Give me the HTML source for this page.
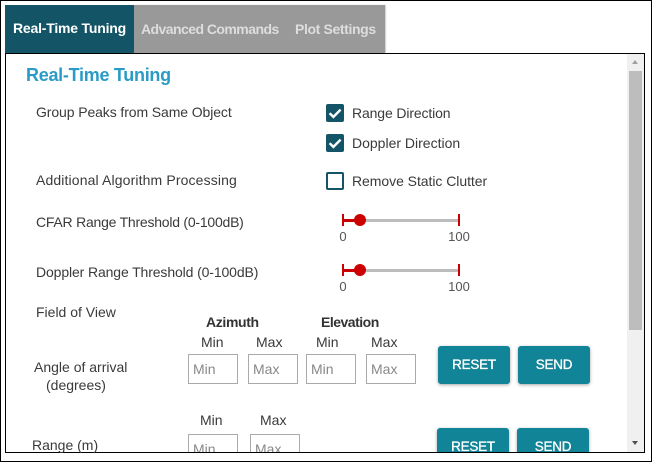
<!DOCTYPE html>
<html><head><meta charset="utf-8"><style>
html,body{margin:0;padding:0;background:#fff}
#r{position:relative;width:652px;height:462px;overflow:hidden;background:#fff;font-family:"Liberation Sans",sans-serif;color:#3a3a3a;font-size:14px}
#r div{position:absolute;white-space:nowrap;box-sizing:border-box}
.t{line-height:16px}
.c{text-align:center}
.box{width:18px;height:18px;border-radius:2px;background:#135566;left:326px}
.box svg{position:absolute;left:0;top:0}
.in{border:1px solid #aaa;height:30px;color:#888;line-height:28px;padding-left:4px;overflow:hidden}
.btn{background:#128497;color:#fff;border-radius:3px;width:72px;height:38px;line-height:37px;text-align:center;box-shadow:0 1px 3px rgba(0,0,0,.35);font-size:13.5px;letter-spacing:-.25px;-webkit-text-stroke:.3px #fff}
.tr{background:#bcbcbc;height:3px}
.rd{background:#cc0000}
</style></head><body><div id="r">
<div style="left:0;top:0;width:652px;height:462px;border:1px solid #000"></div>
<div style="left:5px;top:5px;width:129px;height:48px;background:#135566"></div>
<div style="left:134px;top:5px;width:251px;height:48px;background:#999;box-shadow:1px 0 1px #ccc"></div>
<div class="t" style="left:13px;top:20px;color:#fff;font-weight:bold;letter-spacing:-.2px">Real-Time Tuning</div>
<div class="t" style="left:141px;top:21px;color:#ddd;font-weight:bold;letter-spacing:-.55px">Advanced Commands</div>
<div class="t" style="left:295px;top:21px;color:#ddd;font-weight:bold;letter-spacing:-.37px">Plot Settings</div>
<div style="left:5px;top:53px;width:640px;height:400px;border:1px solid #000;overflow:hidden;background:#fff"></div>

<div class="t" style="left:26px;top:66px;color:#2a9bc6;font-weight:bold;font-size:18px;line-height:18px;letter-spacing:-.28px">Real-Time Tuning</div>
<div class="t" style="left:36px;top:104px;letter-spacing:-.1px">Group Peaks from Same Object</div>
<div class="t" style="left:36px;top:172px;letter-spacing:.13px">Additional Algorithm Processing</div>
<div class="t" style="left:36px;top:214px;letter-spacing:-.23px">CFAR Range Threshold (0-100dB)</div>
<div class="t" style="left:36px;top:264px;letter-spacing:-.12px">Doppler Range Threshold (0-100dB)</div>
<div class="t" style="left:36px;top:304px">Field of View</div>
<div class="t" style="left:34px;top:359px">Angle of arrival</div>
<div class="t" style="left:46px;top:377px">(degrees)</div>
<div class="t" style="left:32px;top:437px">Range (m)</div>

<div class="box" style="top:104px"><svg width="18" height="18" viewBox="0 0 18 18"><path d="M3.6 9.2l3.8 3.7L14.6 5.6" fill="none" stroke="#fff" stroke-width="2.4"/></svg></div>
<div class="t" style="left:352px;top:105px;letter-spacing:-.13px">Range Direction</div>
<div class="box" style="top:134px"><svg width="18" height="18" viewBox="0 0 18 18"><path d="M3.6 9.2l3.8 3.7L14.6 5.6" fill="none" stroke="#fff" stroke-width="2.4"/></svg></div>
<div class="t" style="left:352px;top:135px">Doppler Direction</div>
<div class="box" style="top:172px;background:#fff;border:2px solid #135566"></div>
<div class="t" style="left:352px;top:173px;letter-spacing:-.05px">Remove Static Clutter</div>

<div class="tr" style="left:343px;top:219px;width:116px"></div>
<div class="rd" style="left:343px;top:219px;width:17px;height:3px"></div>
<div class="rd" style="left:342px;top:214px;width:2px;height:12px"></div>
<div class="rd" style="left:458px;top:214px;width:2px;height:12px"></div>
<div class="rd" style="left:354px;top:214px;width:12px;height:12px;border-radius:50%"></div>
<div class="t c" style="left:333px;top:229px;width:20px;font-size:13px;color:#555">0</div>
<div class="t c" style="left:444px;top:229px;width:30px;font-size:13px;color:#555">100</div>

<div class="tr" style="left:343px;top:269px;width:116px"></div>
<div class="rd" style="left:343px;top:269px;width:17px;height:3px"></div>
<div class="rd" style="left:342px;top:264px;width:2px;height:12px"></div>
<div class="rd" style="left:458px;top:264px;width:2px;height:12px"></div>
<div class="rd" style="left:354px;top:264px;width:12px;height:12px;border-radius:50%"></div>
<div class="t c" style="left:333px;top:279px;width:20px;font-size:13px;color:#555">0</div>
<div class="t c" style="left:444px;top:279px;width:30px;font-size:13px;color:#555">100</div>

<div class="t" style="left:206px;top:314px;font-weight:bold;color:#333;letter-spacing:-.35px">Azimuth</div>
<div class="t" style="left:321px;top:314px;font-weight:bold;color:#333;letter-spacing:-.5px">Elevation</div>
<div class="t" style="left:201px;top:334px">Min</div>
<div class="t" style="left:256px;top:334px">Max</div>
<div class="t" style="left:316px;top:334px">Min</div>
<div class="t" style="left:371px;top:334px">Max</div>
<div class="in" style="left:188px;top:354px;width:50px">Min</div>
<div class="in" style="left:248px;top:354px;width:50px">Max</div>
<div class="in" style="left:306px;top:354px;width:50px">Min</div>
<div class="in" style="left:366px;top:354px;width:50px">Max</div>
<div class="btn" style="left:438px;top:346px">RESET</div>
<div class="btn" style="left:518px;top:346px">SEND</div>

<div class="t" style="left:200px;top:412px">Min</div>
<div class="t" style="left:260px;top:412px">Max</div>
<div style="left:6px;top:420px;width:622px;height:32px;overflow:hidden">
<div class="in" style="left:182px;top:14px;width:50px">Min</div>
<div class="in" style="left:244px;top:14px;width:50px">Max</div>
<div class="btn" style="left:431px;top:8px">RESET</div>
<div class="btn" style="left:511px;top:8px">SEND</div>
</div>

<div style="left:627px;top:54px;width:17px;height:398px;background:#f0f0f0"></div>
<div style="left:629px;top:71px;width:13px;height:259px;background:#bdbdbd"></div>
<div style="left:632px;top:60px;width:0;height:0;border-left:3.5px solid transparent;border-right:3.5px solid transparent;border-bottom:4px solid #a0a0a0"></div>
<div style="left:632px;top:441px;width:0;height:0;border-left:3.5px solid transparent;border-right:3.5px solid transparent;border-top:4px solid #505050"></div>
</div></body></html>
